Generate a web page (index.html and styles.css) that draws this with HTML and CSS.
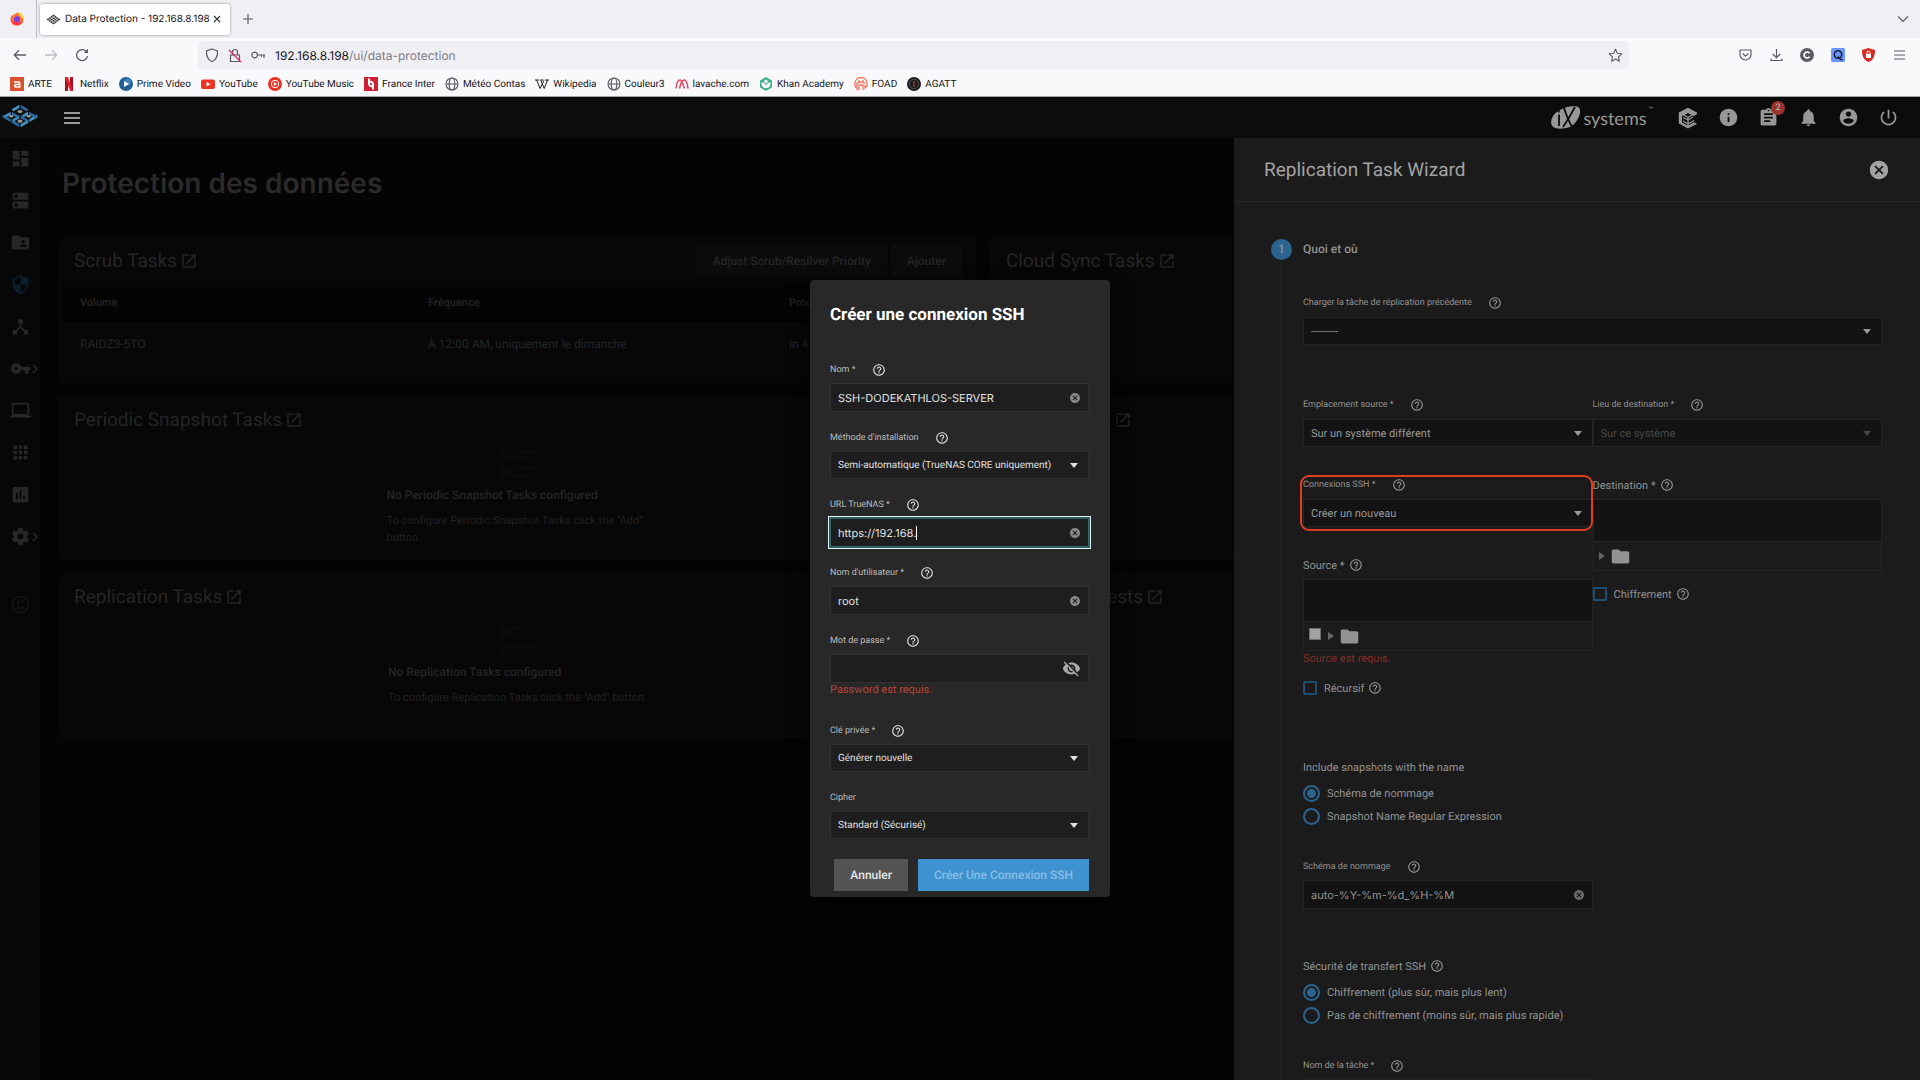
FILE: index.html
```html
<!DOCTYPE html>
<html lang="fr">
<head>
<meta charset="utf-8">
<title>Data Protection - 192.168.8.198</title>
<link rel="stylesheet" href="styles.css">
</head>
<body>
<svg class="sprite" aria-hidden="true">
  <symbol id="help" viewBox="0 0 24 24"><path d="M11 18h2v-2h-2v2zm1-16C6.48 2 2 6.48 2 12s4.48 10 10 10 10-4.48 10-10S17.52 2 12 2zm0 18c-4.41 0-8-3.59-8-8s3.59-8 8-8 8 3.59 8 8-3.59 8-8 8zm0-14c-2.21 0-4 1.79-4 4h2c0-1.1.9-2 2-2s2 .9 2 2c0 2-3 1.75-3 5h2c0-2.25 3-2.5 3-5 0-2.21-1.79-4-4-4z"/></symbol>
  <symbol id="cancel" viewBox="0 0 24 24"><path d="M12 2C6.47 2 2 6.47 2 12s4.47 10 10 10 10-4.47 10-10S17.53 2 12 2zm5 13.59L15.59 17 12 13.41 8.41 17 7 15.59 10.59 12 7 8.41 8.41 7 12 10.59 15.59 7 17 8.41 13.41 12 17 15.59z"/></symbol>
  <symbol id="launch" viewBox="0 0 24 24"><path d="M19 19H5V5h7V3H5c-1.11 0-2 .9-2 2v14c0 1.1.89 2 2 2h14c1.1 0 2-.9 2-2v-7h-2v7zM14 3v2h3.59l-9.83 9.83 1.41 1.41L19 6.41V10h2V3h-7z"/></symbol>
  <symbol id="folder" viewBox="0 0 24 24"><path d="M10 4H4c-1.1 0-1.99.9-1.99 2L2 18c0 1.1.9 2 2 2h16c1.1 0 2-.9 2-2V8c0-1.1-.9-2-2-2h-8l-2-2z"/></symbol>
  <symbol id="list" viewBox="0 0 36 32"><path d="M0 1h11v11H0zM14 1h22v4H14zM14 8h12v4H14zM0 19h11v11H0zM14 19h22v4H14zM14 26h12v4H14z"/></symbol>
  <symbol id="chevron" viewBox="0 0 8 12"><path d="M2 2l4 4-4 4" fill="none" stroke="currentColor" stroke-width="1.5"/></symbol>
  <symbol id="globe" viewBox="0 0 14 14"><g fill="none" stroke="#5b5b66" stroke-width="1.1"><circle cx="7" cy="7" r="6"/><ellipse cx="7" cy="7" rx="2.8" ry="6"/><path d="M1 7h12"/></g></symbol>
  <symbol id="truenas" viewBox="5 42 112 72">
    <g fill="#4292c0">
      <path d="M59 43v10L42 63l-8-5zM7 79l25-14v10l-17 9zM86 64v10L69 84v-10zM63 113v-10l24-14v10zM90 97v-10l25-14v10zM59 75v10L42 95l-6-5z"/>
    </g>
    <g fill="#2c679e">
      <path d="M63 43v10l17 10 8-5zM36 65v10l17 9 6-5zM90 65v10l17 9 8-5zM7 73v10l25 14v-10zM59 113v-10L35 89v10zM63 75v10l17 10 6-5z"/>
    </g>
    <g fill="#999"><ellipse cx="61" cy="64" rx="8" ry="5"/><ellipse cx="34" cy="79" rx="7" ry="4"/><ellipse cx="88" cy="79" rx="7" ry="4"/><ellipse cx="61" cy="94" rx="8" ry="5"/></g>
  </symbol>
</svg>

<div class="window">
  <header class="browser">
    <div class="tabs">
      <a class="pinned" href="#" aria-label="Firefox"><svg width="16" height="16" viewBox="0 0 16 16"><path d="M8 1.500C12 1.500 14.500 4.500 14.500 8.300c0 3.700-2.900 6.500-6.500 6.500S1.500 12 1.500 8.500c0-2 .6-3.400 1.600-4.700l.7 1.300C5 3 6.500 3 8 1.500z" fill="#ff7139"/><path d="M9 1c3.800 1.500 5.700 4 5.500 7.600L12 6C10.500 4.500 9.300 3.500 9 1z" fill="#ffd23c"/><path d="M2 7.500c.3 4 3 6.500 6 6.500 3 0 5-2 5.500-4.500C12 12 5 13 2 7.500z" fill="#ff3050"/><circle cx="8" cy="8.300" r="3" fill="#7542e5"/></svg></a>
      <div class="tab">
        <svg width="15" height="11" viewBox="0 0 30 22"><path d="M15 1L29 11 15 21 1 11z" fill="#38383d"/><path d="M8 6l14 10M22 6L8 16M11.500 3.500l14 10M4.500 8.500l14 10M18.500 3.500l-14 10M25.500 8.500l-14 10" stroke="#fff" stroke-width="1.200"/></svg>
        <span>Data Protection - 192.168.8.198</span>
        <button aria-label="Fermer l’onglet"><svg width="10" height="10" viewBox="0 0 10 10"><path d="M2 2l6 6M8 2l-6 6" stroke="#333" stroke-width="1.100"/></svg></button>
      </div>
      <button class="newtab" aria-label="Nouvel onglet"><svg width="12" height="12" viewBox="0 0 12 12"><path d="M6 1v10M1 6h10" stroke="#5b5b66" stroke-width="1.200"/></svg></button>
      <button class="alltabs" aria-label="Lister les onglets"><svg width="12" height="8" viewBox="0 0 12 8"><path d="M1 1.500l5 5 5-5" fill="none" stroke="#5b5b66" stroke-width="1.200"/></svg></button>
    </div>
    <div class="navbar">
      <div class="navbuttons">
        <button aria-label="Précédent"><svg width="14" height="12" viewBox="0 0 14 12"><path d="M13 6H1.500M6 1.300L1.300 6 6 10.700" fill="none" stroke="#5b5b66" stroke-width="1.300"/></svg></button>
        <button aria-label="Suivant"><svg width="14" height="12" viewBox="0 0 14 12"><path d="M1 6h11.500M8 1.300L12.700 6 8 10.700" fill="none" stroke="#bfbfc6" stroke-width="1.300"/></svg></button>
        <button aria-label="Actualiser"><svg width="14" height="14" viewBox="0 0 14 14"><path d="M12.500 8A5.500 5.500 0 1 1 11 3.200" fill="none" stroke="#5b5b66" stroke-width="1.300"/><path d="M13 .8V5H8.800z" fill="#5b5b66"/></svg></button>
      </div>
      <div class="urlbar">
        <svg width="14" height="15" viewBox="0 0 14 15"><path d="M7 1l5.500 2c.3 5-1.200 8.700-5.500 10.700C2.700 11.700 1.200 8 1.500 3z" fill="none" stroke="#5b5b66" stroke-width="1.200"/></svg>
        <svg width="14" height="15" viewBox="0 0 14 15"><path d="M2.500 7h9v6.500h-9zM4.500 7V4a2.500 2.500 0 0 1 5 0v3" fill="none" stroke="#5b5b66" stroke-width="1.200"/><path d="M1 2l12 12" stroke="#e22850" stroke-width="1.300"/></svg>
        <svg width="15" height="8" viewBox="0 0 15 8"><path d="M6.500 4H14M13 4v3M10.500 4v2" stroke="#5b5b66" stroke-width="1.200"/><circle cx="3.700" cy="4" r="2.800" fill="none" stroke="#5b5b66" stroke-width="1.200"/></svg>
        <p class="url">192.168.8.198<span>/ui/data-protection</span></p>
        <svg width="15" height="15" viewBox="0 0 16 16"><path d="M8 1.300l2 4.300 4.700.6-3.500 3.200.9 4.700L8 11.800l-4.100 2.300.9-4.700L1.300 6.200 6 5.600z" fill="none" stroke="#5b5b66" stroke-width="1.200" stroke-linejoin="round"/></svg>
      </div>
      <div class="exts">
        <button aria-label="Pocket"><svg width="13" height="12" viewBox="0 0 13 12"><path d="M1 1h11v4.500a5.500 5.500 0 0 1-11 0zM3.700 4.500l2.800 2.600 2.800-2.600" fill="none" stroke="#5b5b66" stroke-width="1.200" stroke-linejoin="round"/></svg></button>
        <button aria-label="Téléchargements"><svg width="13" height="14" viewBox="0 0 13 14"><path d="M6.500 1v8.500M2.800 6l3.700 3.700L10.200 6M1 10.500v2h11v-2" fill="none" stroke="#5b5b66" stroke-width="1.200"/></svg></button>
        <button aria-label="C"><svg width="14" height="14" viewBox="0 0 14 14"><circle cx="7" cy="7" r="7" fill="#5b5b66"/><path d="M9.500 5.200a3 3 0 1 0 0 3.600" fill="none" stroke="#fff" stroke-width="1.700"/></svg></button>
        <button aria-label="Qwant"><svg width="14" height="14" viewBox="0 0 14 14"><rect width="14" height="14" rx="1.500" fill="#6a96f7"/><circle cx="7" cy="6.500" r="3.700" fill="none" stroke="#151b3a" stroke-width="1.500"/><path d="M7 8.500l2.500 3h2" fill="none" stroke="#151b3a" stroke-width="1.300"/></svg></button>
        <button aria-label="Bloqueur"><svg width="13" height="14" viewBox="0 0 13 14"><path d="M6.500 0L13 2c0 6-1.500 10-6.500 12C1.500 12 0 8 0 2z" fill="#d62d23"/><rect x="4" y="6" width="5" height="4" fill="#fff"/><path d="M5 6V4.700a1.500 1.500 0 0 1 3 0V6" fill="none" stroke="#fff"/></svg></button>
        <button aria-label="Menu"><svg width="11" height="10" viewBox="0 0 11 10"><path d="M0 1h11M0 5h11M0 9h11" stroke="#5b5b66" stroke-width="1.200"/></svg></button>
      </div>
    </div>
    <nav class="bookmarks" aria-label="Marque-pages">
      <a href="#"><svg viewBox="0 0 14 14"><rect width="14" height="14" fill="#d9532f"/><path d="M4 5h4.500a1.200 1.200 0 0 1 1.200 1.200V10H5.500a1.300 1.300 0 0 1 0-2.500h4" fill="none" stroke="#fff" stroke-width="1.500"/></svg>ARTE</a>
      <a href="#"><svg viewBox="0 0 14 14"><path d="M3 0h3v14H3zM8 0h3v14H8z" fill="#a5121b"/><path d="M3 0h3l5 14H8z" fill="#e5222d"/></svg>Netflix</a>
      <a href="#"><svg viewBox="0 0 14 14"><circle cx="7" cy="7" r="7" fill="#225f94"/><circle cx="8.500" cy="5" r="3.500" fill="#3b86bb"/><path d="M5 4l5 3-5 3z" fill="#fff"/></svg>Prime Video</a>
      <a href="#"><svg viewBox="0 0 14 14"><rect y="2.500" width="14" height="9.500" rx="2" fill="#ea3323"/><path d="M5.500 5l4 2.200-4 2.200z" fill="#fff"/></svg>YouTube</a>
      <a href="#"><svg viewBox="0 0 14 14"><circle cx="7" cy="7" r="7" fill="#ea3323"/><circle cx="7" cy="7" r="3.700" fill="none" stroke="#fff"/><path d="M5.800 5l3.200 2-3.200 2z" fill="#fff"/></svg>YouTube Music</a>
      <a href="#"><svg viewBox="0 0 14 14"><rect width="14" height="14" fill="#d02036"/><path d="M5 1.500v5.500M9 7v5.500M9 7a2.500 2.500 0 0 0-3.500-2M5 7a2.500 2.500 0 0 0 3.500 2" fill="none" stroke="#fff" stroke-width="2"/></svg>France Inter</a>
      <a href="#"><svg><use href="#globe"/></svg>Météo Contas</a>
      <a href="#"><svg viewBox="0 0 14 14"><path d="M0 3h4M5 3h3.500M10 3h4M1.700 3L5 11.500 9 3.500M5.700 3l3.500 8.500L12.500 3" fill="none" stroke="#222"/></svg>Wikipedia</a>
      <a href="#"><svg><use href="#globe"/></svg>Couleur3</a>
      <a href="#"><svg viewBox="0 0 14 14"><path d="M1 11.500C1.500 7 3 3 5 3s3 5 4.500 8.500M4.500 11.500C5.500 7 7 3 9 3s3.500 4 4 8.500" fill="none" stroke="#ef4460" stroke-width="1.500"/></svg>lavache.com</a>
      <a href="#"><svg viewBox="0 0 14 14"><path d="M7 0l6 3.500v7L7 14l-6-3.500v-7z" fill="#43b28a"/><circle cx="7" cy="4.500" r="1.700" fill="#fff"/><path d="M2.500 5.500c3 0 4.500 1.500 4.500 4.500 0-3 1.500-4.500 4.500-4.500 0 4-1.500 5.500-4.500 5.500S2.500 9.500 2.500 5.500z" fill="#fff"/></svg>Khan Academy</a>
      <a href="#"><svg viewBox="0 0 14 14"><path d="M1 9V6a6 5.500 0 0 1 12 0v3l-2 2V8M1 9l2 3V6.500c2-2 6-2 8 0M5 13V8h4v5M5 5V3M9 5V3" fill="none" stroke="#f0735a" stroke-width="1.300"/></svg>FOAD</a>
      <a href="#"><svg viewBox="0 0 14 14"><circle cx="7" cy="7" r="7" fill="#1b1b1d"/><circle cx="7" cy="7" r="4.700" fill="none" stroke="#666" stroke-width=".7"/><path d="M7 4v6" stroke="#a4473e" stroke-width="1.300"/></svg>AGATT</a>
    </nav>
  </header>

  <div class="app">
    <header class="topbar">
      <svg class="brand" width="36" height="24"><use href="#truenas"/></svg>
      <button class="burger" aria-label="Menu"><svg width="16" height="12" viewBox="0 0 16 12"><path d="M0 1h16M0 6h16M0 11h16" stroke="#999" stroke-width="2"/></svg></button>
      <a class="ix" href="#"><svg width="30" height="23" viewBox="0 0 30 23"><path d="M9 4C14 1 20-.5 26 .5c4 1 4 7 1 12-2 4-5 7-8 8.500-6 2-11 2-15 1C-.5 20-.5 16 1 12c1.500-3.500 4.500-6.500 8-8z" fill="#979797"/><path d="M8 8.500V20M8 4.500v2M13 2c2 6 4 12 8 19M24 1C20 8 17 14 12 21" stroke="#0c0c0c" stroke-width="1.800" fill="none"/></svg><span>systems</span><sup>™</sup></a>
      <button aria-label="TrueCommand"><svg width="20" height="22" viewBox="0 0 20 22"><path d="M10 .8L19 5.500v1.800L15.500 9 10 6 4 9v6.500l6 3.300 6-3.500 3 1.500L10 21.500.8 16.500v-11z" fill="#979797"/><path d="M10 4.500l5 3-5 3-5-3zM10 11v8M10 13l5-3M10 17l6-3.500M5 10.500l5 2.500M5 14l5 3" fill="none" stroke="#979797" stroke-width="1.300"/><path d="M10 7v2" stroke="#0c0c0c"/></svg></button>
      <button aria-label="Information"><svg class="ic" viewBox="0 0 24 24"><path d="M12 2C6.480 2 2 6.480 2 12s4.480 10 10 10 10-4.480 10-10S17.520 2 12 2zm1 15h-2v-6h2v6zm0-8h-2V7h2v2z"/></svg></button>
      <button class="jobs" aria-label="Tâches"><svg class="ic" viewBox="0 0 24 24"><path d="M19 3h-4.180C14.400 1.840 13.300 1 12 1c-1.300 0-2.400.84-2.820 2H5c-1.100 0-2 .9-2 2v14c0 1.100.9 2 2 2h14c1.100 0 2-.9 2-2V5c0-1.100-.9-2-2-2zm-7 0c.55 0 1 .45 1 1s-.45 1-1 1-1-.45-1-1 .45-1 1-1zm2 14H7v-2h7v2zm3-4H7v-2h10v2zm0-4H7V7h10v2z"/></svg><span class="badge">2</span></button>
      <button aria-label="Alertes"><svg class="ic" viewBox="0 0 24 24"><path d="M12 22c1.100 0 2-.9 2-2h-4c0 1.100.89 2 2 2zm6-6v-5c0-3.070-1.640-5.640-4.500-6.320V4c0-.83-.67-1.500-1.500-1.500s-1.500.67-1.500 1.500v.68C7.630 5.360 6 7.920 6 11v5l-2 2v1h16v-1l-2-2z"/></svg></button>
      <button aria-label="Compte"><svg class="ic" viewBox="0 0 24 24"><path d="M12 2C6.480 2 2 6.480 2 12s4.480 10 10 10 10-4.480 10-10S17.520 2 12 2zm0 3c1.660 0 3 1.340 3 3s-1.340 3-3 3-3-1.340-3-3 1.340-3 3-3zm0 14.200c-2.500 0-4.710-1.280-6-3.220.03-1.990 4-3.080 6-3.080 1.990 0 5.970 1.090 6 3.080-1.290 1.940-3.500 3.220-6 3.220z"/></svg></button>
      <button aria-label="Alimentation"><svg class="ic" viewBox="0 0 24 24"><path d="M13 3h-2v10h2V3zm4.830 2.170l-1.420 1.420C17.990 7.860 19 9.810 19 12c0 3.870-3.130 7-7 7s-7-3.130-7-7c0-2.190 1.010-4.140 2.580-5.420L6.170 5.170C4.230 6.820 3 9.260 3 12c0 4.970 4.030 9 9 9s9-4.030 9-9c0-2.740-1.230-5.180-3.170-6.830z"/></svg></button>
    </header>

    <div class="body">
      <nav class="side" aria-label="Navigation">
        <a href="#" aria-label="Dashboard"><svg viewBox="0 0 24 24"><path d="M3 13h8V3H3v10zm0 8h8v-6H3v6zm10 0h8V11h-8v10zm0-18v6h8V3h-8z"/></svg></a>
        <a href="#" aria-label="Stockage"><svg viewBox="0 0 24 24"><path d="M20 13H4c-.55 0-1 .45-1 1v6c0 .55.45 1 1 1h16c.55 0 1-.45 1-1v-6c0-.55-.45-1-1-1zM7 19c-1.100 0-2-.9-2-2s.9-2 2-2 2 .9 2 2-.9 2-2 2zM20 3H4c-.55 0-1 .45-1 1v6c0 .55.45 1 1 1h16c.55 0 1-.45 1-1V4c0-.55-.45-1-1-1zM7 9c-1.100 0-2-.9-2-2s.9-2 2-2 2 .9 2 2-.9 2-2 2z"/></svg></a>
        <a href="#" aria-label="Partages"><svg viewBox="0 0 24 24"><path d="M20 6h-8l-2-2H4c-1.100 0-1.990.9-1.990 2L2 18c0 1.100.9 2 2 2h16c1.100 0 2-.9 2-2V8c0-1.100-.9-2-2-2zm-5 3c1.100 0 2 .9 2 2s-.9 2-2 2-2-.9-2-2 .9-2 2-2zm4 8h-8v-1c0-1.330 2.670-2 4-2s4 .67 4 2v1z"/></svg></a>
        <a class="active" href="#" aria-label="Protection des données"><svg viewBox="0 0 24 24"><path d="M12 1L3 5v6c0 5.550 3.840 10.740 9 12 5.160-1.260 9-6.450 9-12V5l-9-4zm0 10.990h7c-.53 4.120-3.280 7.790-7 8.940V12H5V6.300l7-3.110v8.800z"/></svg></a>
        <a href="#" aria-label="Réseau"><svg viewBox="0 0 24 24"><path d="M17 16l-4-4V8.820C14.160 8.400 15 7.300 15 6c0-1.660-1.340-3-3-3S9 4.340 9 6c0 1.300.84 2.400 2 2.820V12l-4 4H3v5h5v-3.050l4-4.200 4 4.200V21h5v-5h-4z"/></svg></a>
        <a href="#" aria-label="Identifiants"><svg viewBox="0 0 24 24"><path d="M12.650 10C11.830 7.670 9.610 6 7 6c-3.310 0-6 2.690-6 6s2.690 6 6 6c2.610 0 4.830-1.670 5.650-4H17v4h4v-4h2v-4H12.650zM7 14c-1.100 0-2-.9-2-2s.9-2 2-2 2 .9 2 2-.9 2-2 2z"/></svg><svg class="more"><use href="#chevron"/></svg></a>
        <a href="#" aria-label="Virtualisation"><svg viewBox="0 0 24 24"><path d="M20 18c1.100 0 1.990-.9 1.990-2L22 5c0-1.100-.9-2-2-2H4c-1.100 0-2 .9-2 2v11c0 1.100.9 2 2 2H0v2h24v-2h-4zM4 5h16v11H4V5z"/></svg></a>
        <a href="#" aria-label="Applications"><svg viewBox="0 0 24 24"><path d="M4 8h4V4H4v4zm6 12h4v-4h-4v4zm-6 0h4v-4H4v4zm0-6h4v-4H4v4zm6 0h4v-4h-4v4zm6-10v4h4V4h-4zm-6 4h4V4h-4v4zm6 6h4v-4h-4v4zm0 6h4v-4h-4v4z"/></svg></a>
        <a href="#" aria-label="Rapports"><svg viewBox="0 0 24 24"><path d="M19 3H5c-1.100 0-2 .9-2 2v14c0 1.100.9 2 2 2h14c1.100 0 2-.9 2-2V5c0-1.100-.9-2-2-2zM9 17H7v-7h2v7zm4 0h-2V7h2v10zm4 0h-2v-4h2v4z"/></svg></a>
        <a href="#" aria-label="Paramètres"><svg viewBox="0 0 24 24"><path d="M19.430 12.980c.04-.32.07-.64.07-.98s-.03-.66-.07-.98l2.110-1.650c.19-.15.24-.42.12-.64l-2-3.460c-.12-.22-.39-.3-.61-.22l-2.490 1c-.52-.4-1.080-.73-1.690-.98l-.38-2.650C14.460 2.180 14.250 2 14 2h-4c-.25 0-.46.18-.49.42l-.38 2.650c-.61.25-1.170.59-1.690.98l-2.490-1c-.23-.09-.49 0-.61.22l-2 3.460c-.13.22-.07.49.12.64l2.110 1.650c-.04.32-.07.65-.07.98s.03.66.07.98l-2.110 1.650c-.19.15-.24.42-.12.64l2 3.460c.12.22.39.3.61.22l2.490-1c.52.4 1.080.73 1.690.98l.38 2.650c.03.24.24.42.49.42h4c.25 0 .46-.18.49-.42l.38-2.650c.61-.25 1.170-.59 1.690-.98l2.490 1c.23.09.49 0 .61-.22l2-3.460c.12-.22.07-.49-.12-.64l-2.110-1.650zM12 15.500c-1.930 0-3.500-1.570-3.500-3.500s1.570-3.500 3.500-3.500 3.500 1.570 3.500 3.500-1.570 3.500-3.500 3.500z"/></svg><svg class="more"><use href="#chevron"/></svg></a>
        <a class="copyright" href="#" aria-label="Copyright"><svg viewBox="0 0 24 24"><path d="M12 2C6.480 2 2 6.480 2 12s4.480 10 10 10 10-4.480 10-10S17.520 2 12 2zm0 18.500a8.500 8.500 0 1 1 0-17 8.500 8.500 0 0 1 0 17zM14.500 10l1.500-.8C15.300 7.800 13.900 7 12 7c-2.600 0-4 2-4 5s1.400 5 4 5c1.900 0 3.300-.8 4-2.200l-1.500-.8c-.5.900-1.300 1.400-2.400 1.400-1.600 0-2.300-1.200-2.300-3.400s.7-3.400 2.300-3.400c1.100 0 1.900.5 2.400 1.400z"/></svg></a>
      </nav>

      <main class="main">
        <h1>Protection des données</h1>
        <div class="cards">
          <section class="card">
            <div class="cardhead"><h2>Scrub Tasks <svg><use href="#launch"/></svg></h2><div class="cardbtns"><button>Adjust Scrub/Resilver Priority</button><button>Ajouter</button></div></div>
            <table>
              <thead><tr><th>Volume</th><th>Fréquence</th><th>Prochaine exécution</th></tr></thead>
              <tbody><tr><td>RAIDZ3-5TO</td><td>À 12:00 AM, uniquement le dimanche</td><td>in 4 days</td></tr></tbody>
            </table>
          </section>
          <section class="card"><div class="cardhead"><h2>Cloud Sync Tasks <svg><use href="#launch"/></svg></h2></div></section>
          <section class="card">
            <div class="cardhead"><h2>Periodic Snapshot Tasks <svg><use href="#launch"/></svg></h2></div>
            <div class="empty"><svg><use href="#list"/></svg><div><h3>No Periodic Snapshot Tasks configured</h3><p>To configure Periodic Snapshot Tasks click the "Add" button.</p></div></div>
          </section>
          <section class="card"><div class="cardhead"><h2>Rsync Tasks <svg><use href="#launch"/></svg></h2></div></section>
          <section class="card">
            <div class="cardhead"><h2>Replication Tasks <svg><use href="#launch"/></svg></h2></div>
            <div class="empty"><svg><use href="#list"/></svg><div><h3>No Replication Tasks configured</h3><p>To configure Replication Tasks click the "Add" button.</p></div></div>
          </section>
          <section class="card"><div class="cardhead"><h2>S.M.A.R.T. Tests <svg><use href="#launch"/></svg></h2></div></section>
        </div>
      </main>

      <aside class="panel">
        <header><h2>Replication Task Wizard</h2><button aria-label="Fermer"><svg width="22" height="22"><use href="#cancel"/></svg></button></header>
        <div class="step"><span class="num">1</span><span>Quoi et où</span></div>
        <form class="stepbody">
          <div class="field">
            <div class="label"><label for="load">Charger la tâche de réplication précédente</label><svg><use href="#help"/></svg></div>
            <div class="select"><select id="load"><option>---------</option></select></div>
          </div>
          <div class="pair spaced">
            <div class="field">
              <div class="label"><label for="srcloc">Emplacement source *</label><svg><use href="#help"/></svg></div>
              <div class="select"><select id="srcloc"><option>Sur un système différent</option></select></div>
            </div>
            <div class="field off">
              <div class="label"><label for="dstloc">Lieu de destination *</label><svg><use href="#help"/></svg></div>
              <div class="select"><select id="dstloc" disabled><option>Sur ce système</option></select></div>
            </div>
          </div>
          <div class="pair">
            <div>
              <div class="field marked">
                <div class="label"><label for="ssh">Connexions SSH *</label><svg><use href="#help"/></svg></div>
                <div class="select"><select id="ssh"><option>Créer un nouveau</option></select></div>
              </div>
              <div class="explorer below">
                <div class="label big"><label for="src">Source *</label><svg><use href="#help"/></svg></div>
                <input class="path" id="src" type="text">
                <div class="tree"><input type="checkbox" aria-label="Sélectionner"><span class="arrow"></span><svg><use href="#folder"/></svg></div>
                <p class="error">Source est requis.</p>
              </div>
              <div class="check"><input type="checkbox" id="rec"><label for="rec">Récursif</label><svg><use href="#help"/></svg></div>
            </div>
            <div>
              <div class="explorer">
                <div class="label big"><label for="dst">Destination *</label><svg><use href="#help"/></svg></div>
                <input class="path" id="dst" type="text">
                <div class="tree"><span class="arrow"></span><svg><use href="#folder"/></svg></div>
              </div>
              <div class="check"><input type="checkbox" id="enc"><label for="enc">Chiffrement</label><svg><use href="#help"/></svg></div>
            </div>
          </div>
          <fieldset class="first">
            <legend class="label big">Include snapshots with the name</legend>
            <label><input type="radio" name="naming" checked>Schéma de nommage</label>
            <label><input type="radio" name="naming">Snapshot Name Regular Expression</label>
          </fieldset>
          <div class="field half">
            <div class="label"><label for="schema">Schéma de nommage</label><svg><use href="#help"/></svg></div>
            <div class="text"><input id="schema" type="text" value="auto-%Y-%m-%d_%H-%M"><svg><use href="#cancel"/></svg></div>
          </div>
          <fieldset class="second">
            <legend class="label big">Sécurité de transfert SSH<svg><use href="#help"/></svg></legend>
            <label><input type="radio" name="security" checked>Chiffrement (plus sûr, mais plus lent)</label>
            <label><input type="radio" name="security">Pas de chiffrement (moins sûr, mais plus rapide)</label>
          </fieldset>
          <div class="field half">
            <div class="label"><label for="task">Nom de la tâche *</label><svg><use href="#help"/></svg></div>
            <div class="text"><input id="task" type="text"></div>
          </div>
        </form>
      </aside>
    </div>
  </div>

  <div class="modal" role="dialog" aria-labelledby="dlg">
    <h2 id="dlg">Créer une connexion SSH</h2>
    <form>
      <div class="field">
        <div class="label"><label for="name">Nom *</label><svg><use href="#help"/></svg></div>
        <div class="text"><input id="name" type="text" value="SSH-DODEKATHLOS-SERVER"><svg><use href="#cancel"/></svg></div>
      </div>
      <div class="field">
        <div class="label"><label for="method">Méthode d'installation</label><svg><use href="#help"/></svg></div>
        <div class="select"><select id="method"><option>Semi-automatique (TrueNAS CORE uniquement)</option></select></div>
      </div>
      <div class="field">
        <div class="label"><label for="host">URL TrueNAS *</label><svg><use href="#help"/></svg></div>
        <div class="text focused"><input id="host" type="text" value="https://192.168."><span class="caret"></span><svg><use href="#cancel"/></svg></div>
      </div>
      <div class="field">
        <div class="label"><label for="user">Nom d'utilisateur *</label><svg><use href="#help"/></svg></div>
        <div class="text"><input id="user" type="text" value="root"><svg><use href="#cancel"/></svg></div>
      </div>
      <div class="field">
        <div class="label"><label for="pass">Mot de passe *</label><svg><use href="#help"/></svg></div>
        <div class="text"><input id="pass" type="password"><svg class="eye" viewBox="0 0 24 24"><path d="M12 7c2.760 0 5 2.240 5 5 0 .65-.13 1.260-.36 1.830l2.920 2.920c1.510-1.260 2.700-2.890 3.430-4.750-1.730-4.390-6-7.500-11-7.500-1.400 0-2.740.25-3.980.7l2.160 2.160C10.740 7.130 11.350 7 12 7zM2 4.270l2.280 2.280.46.46C3.080 8.300 1.780 10.020 1 12c1.730 4.390 6 7.500 11 7.500 1.550 0 3.030-.3 4.380-.84l.42.42L19.730 22 21 20.730 3.270 3 2 4.270zM7.530 9.800l1.550 1.550c-.05.21-.08.43-.08.65 0 1.660 1.340 3 3 3 .22 0 .44-.03.65-.08l1.550 1.550c-.67.33-1.410.53-2.200.53-2.760 0-5-2.240-5-5 0-.79.2-1.530.53-2.200zm4.310-.78l3.150 3.150.02-.16c0-1.660-1.340-3-3-3l-.17.01z"/></svg></div>
        <p class="error">Password est requis.</p>
      </div>
      <div class="field">
        <div class="label"><label for="key">Clé privée *</label><svg><use href="#help"/></svg></div>
        <div class="select"><select id="key"><option>Générer nouvelle</option></select></div>
      </div>
      <div class="field">
        <div class="label"><label for="cipher">Cipher</label></div>
        <div class="select"><select id="cipher"><option>Standard (Sécurisé)</option></select></div>
      </div>
      <div class="actions"><button type="button">Annuler</button><button type="submit" class="primary" disabled>Créer Une Connexion SSH</button></div>
    </form>
  </div>
</div>
</body>
</html>
```
FILE: styles.css
```css
* { box-sizing: border-box; }
body { margin: 0; font-family: Roboto, "Noto Sans", sans-serif; font-size: 12px; background: #040404; text-rendering: geometricPrecision; }
h1, h2, h3, p { margin: 0; font-weight: 400; }
a { color: inherit; text-decoration: none; }
button, input, select { font: inherit; color: inherit; text-rendering: inherit; }
button { border: 0; padding: 0; background: none; }
svg { display: block; flex: none; fill: currentColor; }
.sprite { position: absolute; width: 0; height: 0; }
.window { position: relative; display: flex; flex-direction: column; height: 100vh; overflow: hidden; }

/* Browser chrome */
.browser { flex: none; background: #f9f9fb; border-bottom: 1px solid #a5a5a8; font-family: Inter, sans-serif; color: #15141a; }
.tabs { display: flex; align-items: center; height: 38px; background: #f0eff4; }
.pinned { display: flex; justify-content: center; align-items: center; width: 37px; height: 38px; padding-right: 2px; border-right: 1px solid #bbbbc0; }
.tab { display: flex; align-items: center; width: 190px; height: 31px; margin-left: 3px; padding: 0 8px 0 6px; border-radius: 3px; background: #fff; box-shadow: 0 0 3px #0006; font-size: 10px; white-space: nowrap; }
.tab span { flex: 1; margin-left: 4px; }
.newtab { margin-left: 12px; }
.alltabs { margin-left: auto; margin-right: 11px; }
.navbar { display: flex; align-items: center; height: 34px; }
.navbuttons { display: flex; gap: 17px; width: 198px; padding-left: 13px; }
.urlbar { flex: 1; display: flex; align-items: center; gap: 9px; height: 28px; padding: 0 6px 0 7px; border-radius: 4px; background: #f0eff4; }
.url { flex: 1; font-size: 12px; }
.url span { color: #7d7c84; }
.exts { display: flex; align-items: center; width: 291px; padding-left: 101px; padding-right: 5px; }
.exts button { display: flex; justify-content: center; flex: 1; }
.bookmarks { display: flex; align-items: center; gap: 10px; height: 24px; padding-left: 10px; font-family: Roboto, sans-serif; font-size: 10px; }
.bookmarks a { display: flex; align-items: center; gap: 4px; }
.bookmarks svg { width: 14px; height: 14px; }

/* Application shell */
.app { flex: 1; display: flex; flex-direction: column; min-height: 0; }
.topbar { display: flex; align-items: center; flex: none; height: 41px; padding-right: 12px; background: #0c0c0c; color: #979797; }
.topbar button { display: flex; justify-content: center; width: 40px; }
.brand { margin: 0 11px 4px 2px; }
.topbar .burger { width: 46px; margin-right: auto; }
.ix { display: flex; align-items: center; margin-right: 15px; font-family: Lato, sans-serif; font-weight: 400; font-size: 18px; gap: 2px; }
.ix sup { font-size: 6px; align-self: flex-start; }
.ic { width: 21px; height: 21px; }
.jobs { position: relative; }
.badge { position: absolute; top: -6px; right: 3px; width: 14px; height: 14px; border-radius: 50%; background: #97342b; color: #bbb; font-size: 9px; line-height: 14px; text-align: center; }
.body { position: relative; flex: 1; display: flex; min-height: 0; overflow: hidden; }
.side { flex: none; width: 41px; background: #070707; color: #272727; }
.side a { position: relative; display: flex; justify-content: center; align-items: center; height: 42px; border-bottom: 1px solid #0a0a0a; }
.side svg { width: 21px; height: 21px; }
.side .more { position: absolute; right: 2px; width: 8px; height: 12px; }
.side .active { color: #0b1e2d; }
.side .copyright { margin-top: 25px; border: 0; color: #171717; }

/* Dashboard cards */
.main { flex: 1; padding: 22px 12px 0 18px; color: #252525; }
h1 { padding: 4px 3px; font: 600 28px/38px Inter, sans-serif; color: #2a2a2a; }
.cards { display: grid; grid-template-columns: 1fr 1fr; gap: 14px 15px; margin-top: 32px; }
.card { border: 1px solid #0a0a0a; border-radius: 4px; background: #070707; }
.card:nth-child(-n+2) { min-height: 145px; }
.card:nth-child(n+3) { min-height: 163px; }
.cardhead { display: flex; justify-content: space-between; align-items: center; height: 43px; padding: 0 13px 0 14px; }
.card h2 { display: flex; align-items: center; gap: 3px; font-size: 19px; }
.card h2 svg { width: 18px; height: 18px; }
.cardbtns { display: flex; gap: 4px; }
.cardbtns button { height: 33px; padding: 0 16px; background: #0b0b0b; font-size: 12px; font-weight: 500; }
table { width: 100%; border-collapse: collapse; table-layout: fixed; text-align: left; font-size: 12px; }
th, td { height: 41px; padding: 0 0 0 20px; border-bottom: 1px solid #0b0b0b; }
th { background: #040404; font-size: 11px; font-weight: 500; }
th:first-child { width: 348px; }
th:nth-child(2) { width: 361px; }
.empty { display: flex; flex-direction: column; align-items: center; padding-top: 7px; }
.empty > svg { width: 36px; height: 32px; color: #0a0a0a; }
.empty div { max-width: 262px; margin-top: 7px; }
.empty h3 { font-size: 12px; font-weight: 500; line-height: 17px; }
.empty p { margin-top: 8px; font-size: 11px; line-height: 17px; color: #202020; }

/* Form parts */
.label { display: flex; align-items: center; gap: 16px; height: 20px; margin-bottom: 4px; font-size: 9px; }
.label svg, .check svg { width: 14px; height: 14px; }
.label.big { gap: 4px; font-size: 11px; }
.select, .text { display: flex; align-items: center; border: 1px solid #303030; background: #1e1e1e; }
.select { position: relative; height: 28px; }
.select::after { content: ""; position: absolute; right: 10px; border: 4px solid transparent; border-top: 5px solid; border-bottom: 0; pointer-events: none; }
select { appearance: none; width: 100%; height: 100%; padding: 0 7px; border: 0; outline: 0; background: none; font-size: 11px; opacity: 1; }
.text { height: 29px; margin-top: -1px; padding: 0 7px; font-family: Inter, sans-serif; }
.text input { flex: 1; min-width: 0; padding: 0; border: 0; outline: 0; background: none; font-size: 11px; }
.text svg { width: 12px; height: 12px; color: #888; }
.text .eye { width: 19px; height: 19px; color: #aaa; }
.error { color: #b5382e; font-size: 11px; line-height: 14px; }

/* Wizard panel */
.panel { position: absolute; top: 0; right: 0; bottom: 0; width: 686px; overflow: hidden; background: #1b1b1b; color: #929292; }
.panel header { display: flex; justify-content: space-between; align-items: center; height: 64px; padding: 0 30px; border-bottom: 1px solid #242424; color: #a2a2a2; }
.panel header h2 { font-size: 19px; }
.step { display: flex; align-items: center; gap: 11px; height: 22px; margin: 36px 0 4px 37px; font-size: 12px; font-weight: 500; }
.num { width: 21px; height: 21px; border-radius: 50%; background: #2b648f; line-height: 21px; text-align: center; }
.stepbody { margin: 0 38px 0 47px; padding: 29px 0 0 21px; border-left: 1px solid #242424; }
.panel .select, .panel .text, .path, .tree { border-color: #242424; background-color: #131313; }
.panel .select { color: #999; }
.panel .text svg { color: #696969; }
.panel .error { padding-top: 1px; color: #83302a; }
.panel .off .select { color: #484848; }
.pair { display: grid; grid-template-columns: 1fr 1fr; }
.spaced { margin: 50px 0 28px; }
.marked { position: relative; }
.marked::before { content: ""; position: absolute; inset: 0 0 -4px -3px; border: 2px solid #e23d23; border-radius: 9px; pointer-events: none; z-index: 1; }
.below { margin-top: 28px; }
.path { display: block; width: 100%; height: 43px; padding: 0 7px; border: 1px solid #242424; }
.panel .tree { display: flex; align-items: center; gap: 5px; height: 29px; padding: 0 5px; border: 1px solid #242424; border-top: 0; background: none; }
.tree svg { width: 21px; height: 21px; }
.tree input { appearance: none; width: 12px; height: 12px; margin: 0 2px 4px 0; border: 1px solid #6d6d6d; background: #a2a2a2; }
.arrow { border: 4px solid transparent; border-left: 6px solid #666; border-right: 0; }
.check { display: flex; align-items: center; gap: 4px; height: 20px; margin-top: 12px; font-size: 11px; }
.explorer:not(.below) + .check { margin-top: 13px; }
.check input { appearance: none; width: 14px; height: 14px; margin: 0 3px 0 0; border: 2px solid #1f4d70; border-radius: 1px; }
fieldset { margin: 0; padding: 0; border: 0; min-width: 0; }
legend { padding: 0; }
fieldset .label { margin-bottom: 5px; }
fieldset > label { display: flex; align-items: center; gap: 7px; height: 23px; font-size: 11px; }
fieldset input { appearance: none; width: 17px; height: 17px; margin: 0; border: 2px solid #2b648f; border-radius: 50%; }
fieldset input:checked { background: radial-gradient(#2b648f 4px, transparent 5px); }
.first { margin: 59px 0 29px; }
.second { margin: 47px 0 29px; }
.half { width: 50%; }

/* SSH connection dialog */
.modal { position: absolute; top: 280px; left: calc(50% - 150px); width: 300px; padding: 23px 21px 6px 20px; border-radius: 4px; background: #282828; box-shadow: 0 8px 20px #000; color: #b4b4b4; }
.modal h2 { margin-bottom: 33px; font-size: 17px; font-weight: 700; line-height: 24px; color: #fff; }
.modal .field { margin-bottom: 16px; }
.modal .label { margin-bottom: 3px; color: #bbb; }
.modal .label svg { color: #ddd; }
.modal .select, .modal .text { color: #e0e0e0; }
.modal select { font-size: 10px; }
.modal .text { margin-top: 0; }
.modal .error { margin: 0 0 24px; color: #b5453b; }
.modal .focused { box-shadow: 0 0 0 1px #2a5a60, 0 0 0 2px #e4f2f2; border-color: #2f6469; }
.focused input { flex: none; field-sizing: content; }
.caret { width: 1px; height: 14px; margin-right: auto; background: #fff; }
.actions { display: flex; justify-content: flex-end; gap: 10px; margin-top: 20px; }
.actions button { height: 32px; padding: 0 16px; background: #545454; color: #e6e6e6; font-size: 12px; font-weight: 500; }
.actions .primary { background: #3f92d0; color: #86bee4; }
```
